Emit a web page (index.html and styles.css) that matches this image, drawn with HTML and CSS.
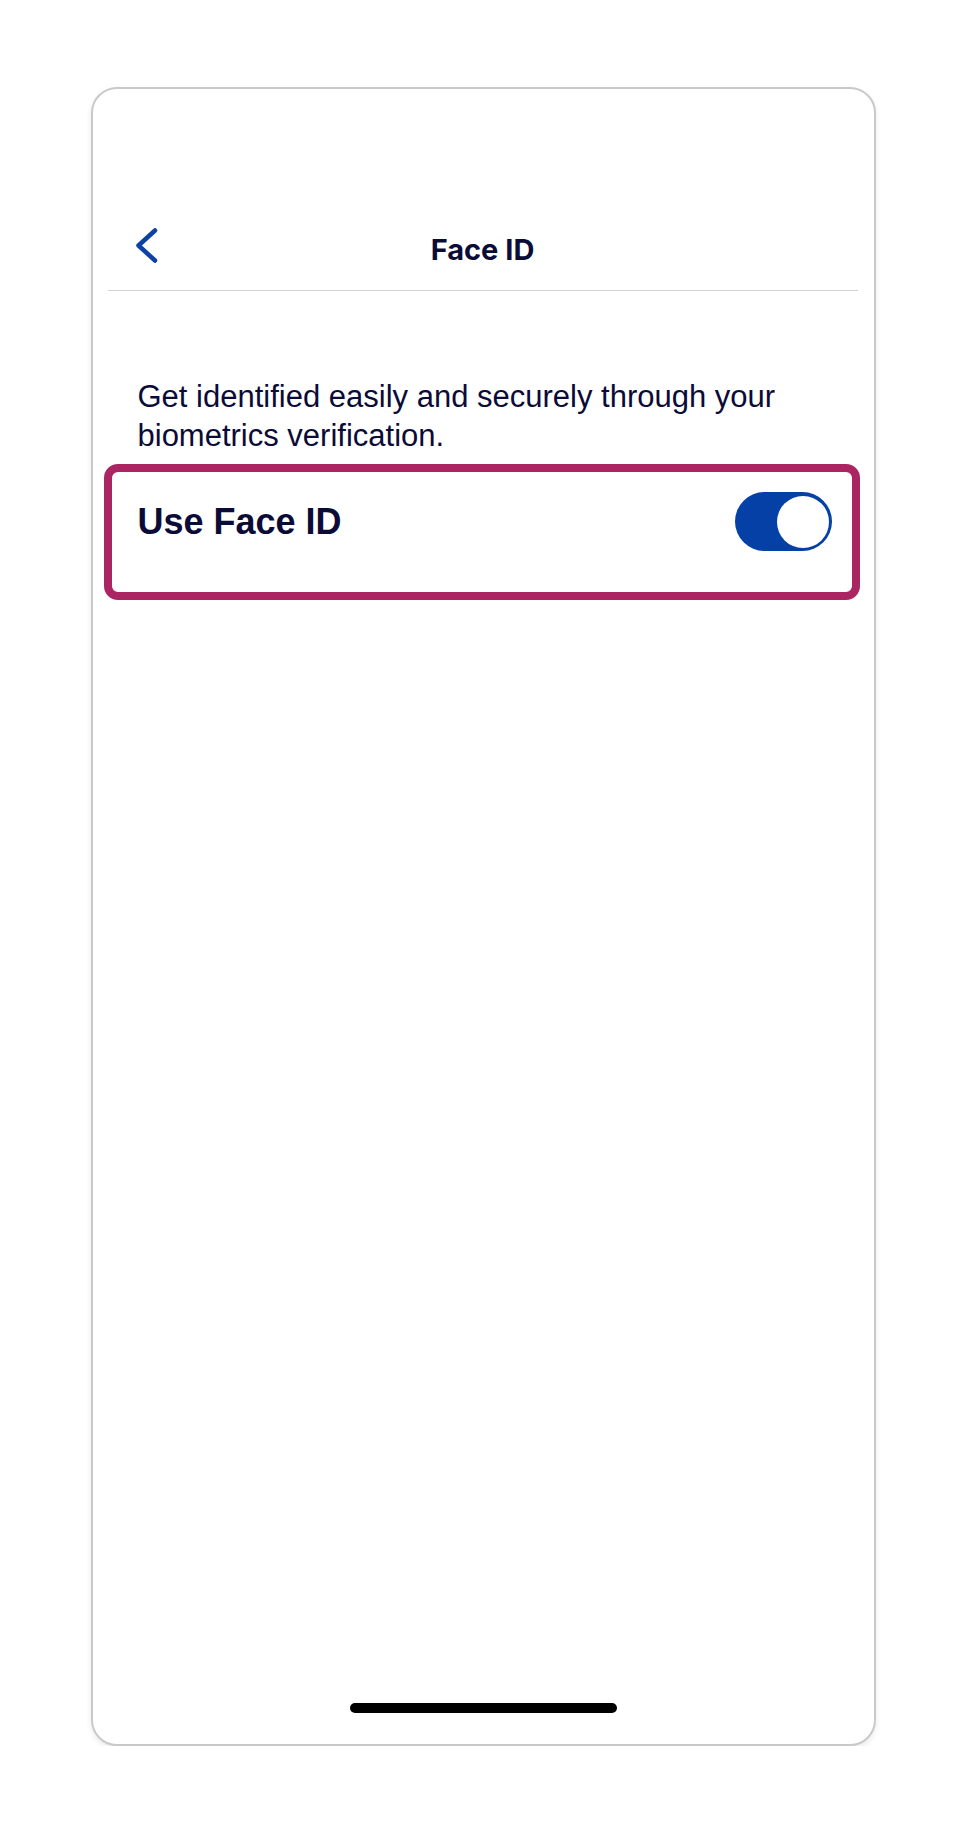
FILE: index.html
```html
<!DOCTYPE html>
<html lang="en">

<head>
    <meta charset="UTF-8">
    <meta name="viewport" content="width=device-width, initial-scale=1.0">
    <title>Face ID</title>
    <link rel="stylesheet" href="styles.css">
</head>

<body>
    <div class="phone">
        <div class="nav-bar">
            <svg class="back-icon" width="30" height="44" viewBox="0 0 30 44" aria-label="Back">
                <polyline points="23,6.5 6.5,21.5 23,36.5" fill="none" stroke="#0b42a4" stroke-width="4.5"
                    stroke-linecap="round" stroke-linejoin="round" />
            </svg>
            <h1 class="nav-title">Face ID</h1>
            <span class="nav-spacer"></span>
        </div>

        <p class="intro">Get identified easily and securely through your biometrics verification.</p>

        <div class="setting-box">
            <div class="setting-row">
                <span class="setting-label">Use Face ID</span>
                <span class="toggle is-on"><span class="knob"></span></span>
            </div>
        </div>

        <div class="filler"></div>
        <div class="home-bar"></div>
    </div>
</body>

</html>
```

FILE: styles.css
```css
      body {
          margin: 0;
          padding: 87px 0 0;
          background: #fff;
          font-family: 'Liberation Sans', Arial, sans-serif;
          color: #0b0b38;
      }

      .phone {
          width: 785px;
          height: 1659px;
          box-sizing: border-box;
          margin: 0 auto;
          border: 2px solid #c9c9c9;
          border-radius: 26px;
          box-shadow: 0 3px 6px rgba(0, 0, 0, 0.08);
          display: flex;
          flex-direction: column;
          background: #fff;
      }

      /* top bar with back arrow */
      .nav-bar {
          display: flex;
          align-items: center;
          height: 60px;
          margin: 130px 16px 0 15px;
          padding-bottom: 11px;
          border-bottom: 1px solid #d3d3d3;
      }

      .back-icon {
          align-self: flex-start;
          margin: 5px 0 0 24px;
          flex: none;
      }

      .nav-spacer {
          width: 54px;
          flex: none;
      }

      .nav-title {
          flex: 1;
          margin: 0;
          text-align: center;
          font-family: 'Inter', sans-serif;
          font-weight: 700;
          font-size: 29px;
          color: #0b0b38;
      }

      .intro {
          margin: 86px 40px 0 45px;
          font-size: 31px;
          line-height: 39px;
      }

      .setting-box {
          margin: 9px 14px 0 11px;
          border: 8px solid #aa2562;
          border-radius: 14px;
          padding: 20px 20px 41px 26px;
      }

      .setting-row {
          display: flex;
          align-items: center;
          justify-content: space-between;
      }

      .setting-label {
          font-weight: 700;
          font-size: 36px;
      }

      .toggle {
          width: 97px;
          height: 59px;
          box-sizing: border-box;
          border-radius: 30px;
          background: #c8c8c8;
          display: flex;
          align-items: center;
          padding: 0 3px;
      }

      .toggle.is-on {
          background: #0540a6;
          justify-content: flex-end;
      }

      .knob {
          width: 52px;
          height: 52px;
          border-radius: 50%;
          background: #fff;
      }

      .filler {
          flex: 1;
      }

      .home-bar {
          width: 267px;
          height: 10px;
          border-radius: 5px;
          background: #000;
          margin: 0 auto 31px;
      }
```
